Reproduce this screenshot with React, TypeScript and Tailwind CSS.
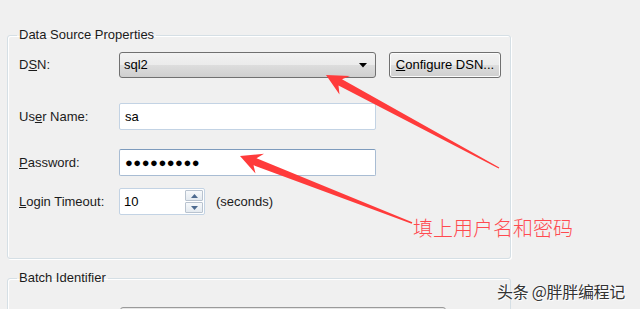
export default function App() {
  const label = "w-[100px] shrink-0 text-[13px] text-[#1b1b1b]";
  const field = "w-[257px] h-[27px] bg-white border rounded-[2px] flex items-center px-[5px] text-[13px] text-black";

  return (
    <div className="relative w-[640px] h-[309px] overflow-hidden bg-[#f0f0f0] font-['Liberation_Sans',Arial,sans-serif] text-[13px] leading-[14px]">
      {/* Data Source Properties */}
      <fieldset className="ml-[7px] mt-[28px] w-[504px] h-[231px] border border-[#d5dfe5] rounded-[3px] shadow-[inset_1px_1px_0_#ffffff,1px_1px_0_#ffffff]">
        <legend className="ml-[9px] px-[2px] text-[#1b1b1b]">Data Source Properties</legend>

        <div className="flex flex-col pl-[11px] pt-[10px]">
          {/* DSN */}
          <div className="flex items-center h-[26px]">
            <span className={label}>
              D<span className="underline">S</span>N:
            </span>
            <div className="w-[257px] h-[26px] border border-[#707070] rounded-[3px] bg-[linear-gradient(#f2f2f2_0%,#ebebeb_50%,#dddddd_51%,#cfcfcf_100%)] flex items-center justify-between pl-[4px] pr-[8px]">
              <span className="text-black">sql2</span>
              <svg width="8" height="5" viewBox="0 0 8 5">
                <path d="M0 0H8L4 4.5Z" fill="#000" />
              </svg>
            </div>
            <button className="ml-[13px] w-[112px] h-[26px] border border-[#707070] rounded-[3px] bg-[linear-gradient(#f2f2f2_0%,#ebebeb_50%,#dddddd_51%,#cfcfcf_100%)] text-black text-[13px] flex items-center justify-center shadow-[inset_0_0_0_1px_#fcfcfc]">
              <span className="underline">C</span>onfigure DSN...
            </button>
          </div>

          {/* User Name */}
          <div className="flex items-center mt-[25px]">
            <span className={label}>
              Us<span className="underline">e</span>r Name:
            </span>
            <div className={`${field} border-[#c3d3e4]`}>sa</div>
          </div>

          {/* Password */}
          <div className="flex items-center mt-[19px]">
            <span className={label}>
              <span className="underline">P</span>assword:
            </span>
            <div className={`${field} border-[#a8bcd3] border-t-[#7d9bbd]`}>
              <span className="text-[13px] tracking-[0.5px]">●●●●●●●●●</span>
            </div>
          </div>

          {/* Login Timeout */}
          <div className="flex items-center mt-[12px]">
            <span className={label}>
              <span className="underline">L</span>ogin Timeout:
            </span>
            <div className="flex h-[27px] bg-white border border-[#c3d3e4] rounded-[2px]">
              <div className="w-[65px] flex items-center px-[4px] text-black">10</div>
              <div className="w-[19px] flex flex-col py-[1px] pr-[1px] gap-[1px]">
                <div className="flex-1 border border-[#b9c3cf] rounded-[1px] bg-[linear-gradient(#f7f9fb,#e4eaf0)] flex items-center justify-center">
                  <svg width="7" height="4" viewBox="0 0 7 4">
                    <path d="M0 4H7L3.5 0Z" fill="#4d6a8f" />
                  </svg>
                </div>
                <div className="flex-1 border border-[#b9c3cf] rounded-[1px] bg-[linear-gradient(#f7f9fb,#e4eaf0)] flex items-center justify-center">
                  <svg width="7" height="4" viewBox="0 0 7 4">
                    <path d="M0 0H7L3.5 4Z" fill="#4d6a8f" />
                  </svg>
                </div>
              </div>
            </div>
            <span className="ml-[11px] text-[#1b1b1b]">(seconds)</span>
          </div>
        </div>
      </fieldset>

      {/* Batch Identifier */}
      <fieldset className="ml-[7px] mt-[12px] w-[504px] h-[80px] border border-[#d5dfe5] rounded-[3px] shadow-[inset_1px_1px_0_#ffffff]">
        <legend className="ml-[9px] px-[2px] text-[#1b1b1b]">Batch Identifier</legend>
        <div className="ml-[112px] mt-[22px] w-[326px] h-[26px] border border-[#9a9a9a] rounded-[3px] bg-[#e6e6e6]" />
      </fieldset>

      {/* annotation arrows */}
      <svg className="absolute left-0 top-0 pointer-events-none" width="640" height="309" viewBox="0 0 640 309">
        <polygon
          points="326,75 350,76 342,79.2 499.3,167.5 498.7,168.5 338.5,85.5 339.5,94.5"
          fill="#ff3b3b"
        />
        <polygon
          points="240,156 264,153.8 256.5,158.2 412.3,222.3 411.7,223.7 253.5,165.2 255.5,173.5"
          fill="#ff3b3b"
        />
      </svg>

      <div className="absolute left-[413px] top-[216px] text-[20px] leading-[24px] text-[#ff4a4f] font-['Noto_Sans_CJK_SC',sans-serif] font-light">
        填上用户名和密码
      </div>

      <div className="absolute left-[497px] top-[281px] text-[16px] leading-[20px] tracking-[-0.3px] text-[#333333] font-['Noto_Sans_CJK_SC',sans-serif] [text-shadow:0_0_2px_#ffffff,1px_1px_1px_#ffffff]">
        头条 @胖胖编程记
      </div>
    </div>
  );
}
